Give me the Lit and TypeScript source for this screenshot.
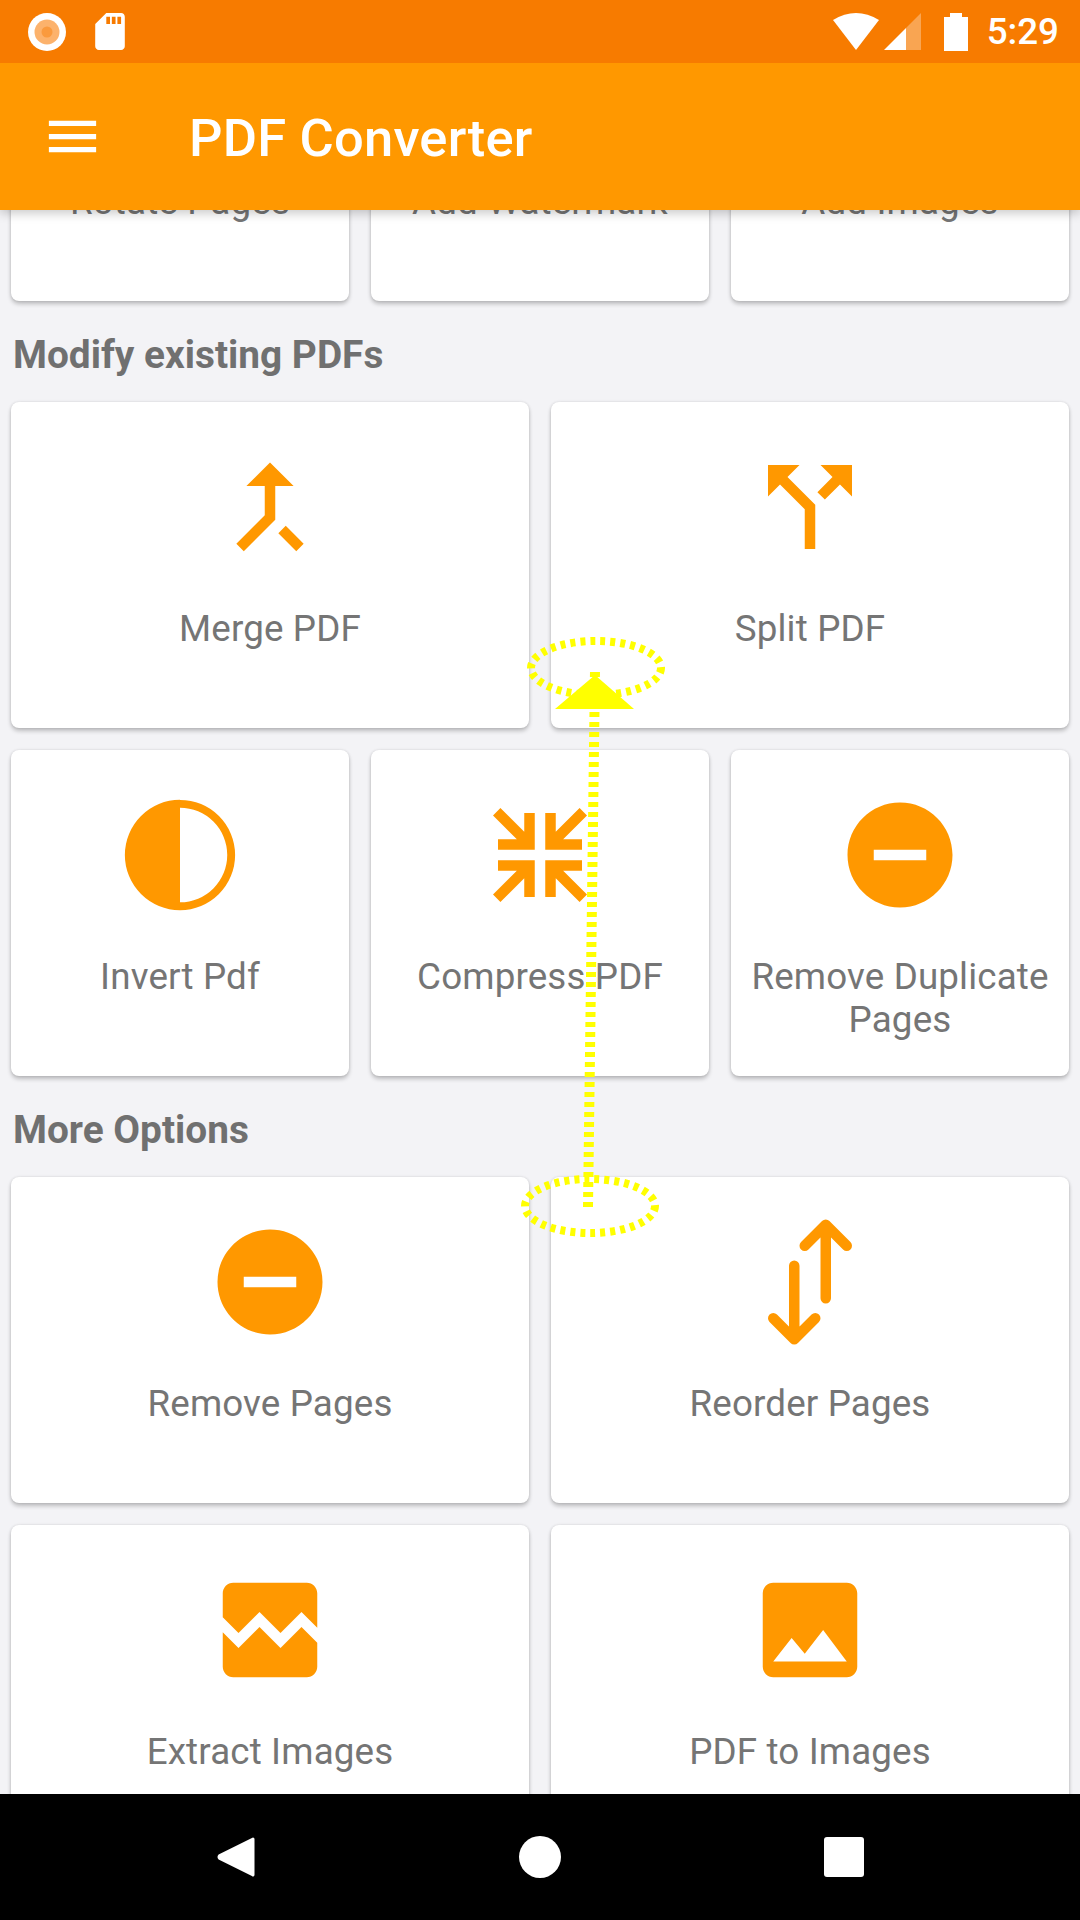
import { LitElement, html, css, svg } from 'lit';
import { customElement } from 'lit/decorators.js';

const COMPRESS_ARM = 'M3.05 4.46L4.46 3.05 9 7.59V4h2v7H4V9h3.59z';

const ICONS: Record<string, unknown> = {
  merge: svg`<path d="M17 20.41L18.41 19 15 15.59 13.59 17 17 20.41zM7.5 8H11v5.59L5.59 19 7 20.41l6-6V8h3.5L12 3.5 7.5 8z"/>`,
  split: svg`<path d="M14 4l2.29 2.29-2.88 2.88 1.42 1.42 2.88-2.88L20 10V4zm-4 0H4v6l2.29-2.29 4.71 4.7V20h2v-8.41l-5.29-5.3z"/>`,
  invert: svg`<path fill-rule="evenodd" d="M12 1.5a10.5 10.5 0 1 0 0 21 10.5 10.5 0 0 0 0-21zM12 3a9 9 0 0 1 0 18z"/>`,
  compress: svg`<path d=${COMPRESS_ARM}/>
    <path transform="matrix(-1 0 0 1 24 0)" d=${COMPRESS_ARM}/>
    <path transform="matrix(1 0 0 -1 0 24)" d=${COMPRESS_ARM}/>
    <path transform="matrix(-1 0 0 -1 24 24)" d=${COMPRESS_ARM}/>`,
  remove: svg`<path d="M12 2C6.48 2 2 6.48 2 12s4.48 10 10 10 10-4.48 10-10S17.52 2 12 2zm5 11H7v-2h10v2z"/>`,
  reorder: svg`<path fill="none" stroke="currentColor" stroke-width="2" stroke-linecap="round" stroke-linejoin="round" d="M15 15.1V1.2M11 5.1l4-4 4 4M9 8.9v14M5 18.9l4 4 4-4"/>`,
  broken: svg`<path d="M21 5v6.59l-3-3.01-4 4.01-4-4-4 4-3-3.01V5c0-1.1.9-2 2-2h14c1.1 0 2 .9 2 2zm-3 6.42l3 3.01V19c0 1.1-.9 2-2 2H5c-1.1 0-2-.9-2-2v-6.58l3 2.99 4-4 4 4 4-3.99z"/>`,
  image: svg`<path d="M21 19V5c0-1.1-.9-2-2-2H5c-1.1 0-2 .9-2 2v14c0 1.1.9 2 2 2h14c1.1 0 2-.9 2-2zM8.5 13.5l2.5 3.01L14.5 12l4.5 6H5l3.5-4.5z"/>`,
};

interface Tool {
  label: string;
  icon?: string;
}

type Row = Tool[];

const TOP_ROW: Row = [{ label: 'Rotate Pages' }, { label: 'Add Watermark' }, { label: 'Add Images' }];

const MODIFY: Row[] = [
  [
    { label: 'Merge PDF', icon: 'merge' },
    { label: 'Split PDF', icon: 'split' },
  ],
  [
    { label: 'Invert Pdf', icon: 'invert' },
    { label: 'Compress PDF', icon: 'compress' },
    { label: 'Remove Duplicate Pages', icon: 'remove' },
  ],
];

const MORE: Row[] = [
  [
    { label: 'Remove Pages', icon: 'remove' },
    { label: 'Reorder Pages', icon: 'reorder' },
  ],
  [
    { label: 'Extract Images', icon: 'broken' },
    { label: 'PDF to Images', icon: 'image' },
  ],
];

@customElement('app-root')
export class AppRoot extends LitElement {
  static styles = css`
    :host {
      display: flex;
      flex-direction: column;
      position: relative;
      width: 1080px;
      height: 1920px;
      overflow: hidden;
      background: #f3f3f6;
      font-family: Roboto, sans-serif;
    }
    .status {
      flex: none;
      height: 63px;
      display: flex;
      align-items: center;
      padding: 0 21px 0 28px;
      background: #f77b00;
      color: #fff;
      position: relative;
      z-index: 3;
    }
    .status svg {
      display: block;
      flex: none;
    }
    .sd {
      margin-left: 29px;
    }
    .status__spacer {
      flex: 1;
    }
    .signal {
      margin-left: 5px;
    }
    .battery {
      margin-left: 23px;
    }
    .time {
      margin-left: 19px;
      font-size: 36.75px;
      font-weight: 500;
      line-height: 43px;
    }
    .toolbar {
      flex: none;
      height: 147px;
      display: flex;
      align-items: center;
      padding-left: 41px;
      background: #ff9800;
      color: #fff;
      box-shadow: 0 3px 10px rgba(0, 0, 0, 0.22);
      position: relative;
      z-index: 2;
    }
    .toolbar svg {
      display: block;
      fill: currentColor;
    }
    .toolbar__title {
      margin-left: 85px;
      padding-top: 2px;
      font-size: 52.5px;
      font-weight: 500;
      letter-spacing: 0.2px;
    }
    .content {
      flex: 1;
      min-height: 0;
      overflow: hidden;
    }
    .scroller {
      margin-top: -235px;
      padding: 0 11px;
      display: flex;
      flex-direction: column;
      gap: 22px;
    }
    .row {
      display: flex;
      gap: 22px;
    }
    .card {
      flex: 1 1 0;
      min-width: 0;
      height: 326px;
      box-sizing: border-box;
      padding: 42px 16px 0;
      display: flex;
      flex-direction: column;
      align-items: center;
      background: #fff;
      border-radius: 8px;
      box-shadow: 0 3px 4px rgba(0, 0, 0, 0.22), 0 0 3px rgba(0, 0, 0, 0.12);
    }
    .card__icon {
      display: block;
      flex: none;
      width: 126px;
      height: 126px;
      fill: currentColor;
      color: #ff9800;
    }
    .card__label {
      margin-top: 37px;
      font-size: 36.75px;
      line-height: 43px;
      letter-spacing: 0.15px;
      color: #757575;
      text-align: center;
    }
    .heading {
      height: 57px;
      box-sizing: border-box;
      padding: 5px 2px 0;
      display: flex;
      align-items: center;
      font-size: 38.8px;
      font-weight: 700;
      color: #707070;
    }
    .section {
      display: flex;
      flex-direction: column;
      gap: 22px;
    }
    .nav {
      flex: none;
      height: 126px;
      display: flex;
      justify-content: center;
      align-items: center;
      background: #000;
      position: relative;
      z-index: 3;
    }
    .nav__cell {
      width: 304px;
      display: flex;
      justify-content: center;
    }
    .nav svg {
      display: block;
      fill: #fff;
    }
    .gesture {
      position: absolute;
      left: 0;
      top: 0;
      z-index: 4;
      pointer-events: none;
    }
  `;

  private renderCard(tool: Tool) {
    return html`
      <div class="card">
        <svg class="card__icon" viewBox="0 0 24 24">${tool.icon ? ICONS[tool.icon] : null}</svg>
        <div class="card__label">${tool.label}</div>
      </div>
    `;
  }

  private renderRow(row: Row) {
    return html`<div class="row">${row.map((t) => this.renderCard(t))}</div>`;
  }

  private renderStatus() {
    return html`
      <div class="status">
        <svg width="38" height="38" viewBox="0 0 38 38">
          <circle cx="19" cy="19" r="19" fill="#fff" />
          <circle cx="19" cy="19" r="12.5" fill="#fcb26c" />
          <circle cx="19" cy="19" r="5.5" fill="#fa9a3e" />
        </svg>
        <svg class="sd" width="30" height="37" viewBox="4 2 16 20" fill="#fff">
          <path
            d="M18 2h-8L4.02 8 4 20c0 1.1.9 2 2 2h12c1.1 0 2-.9 2-2V4c0-1.1-.9-2-2-2zm-6 6h-2V4h2v4zm3 0h-2V4h2v4zm3 0h-2V4h2v4z"
          />
        </svg>
        <div class="status__spacer"></div>
        <svg width="46" height="37" viewBox="0 0 46 37" fill="#fff">
          <path d="M0 7Q23-7 46 7L23 37z" />
        </svg>
        <svg class="signal" width="37" height="37" viewBox="0 0 37 37">
          <path d="M0 37L22 15V37z" fill="#fff" />
          <path d="M22 15L37 0V37H22z" fill="#fff" fill-opacity="0.32" />
        </svg>
        <svg class="battery" width="24" height="38" viewBox="0 0 24 38" fill="#fff">
          <path d="M6 0h12v4h6v34H0V4h6z" />
        </svg>
        <div class="time">5:29</div>
      </div>
    `;
  }

  private renderNav() {
    return html`
      <div class="nav">
        <div class="nav__cell">
          <svg width="38" height="42" viewBox="0 0 38 42">
            <path d="M36 1.5a1.5 1.5 0 0 1 1.5 1.5v36a1.5 1.5 0 0 1-2.6 1L1.6 23.6a4 4 0 0 1 0-5.2L34.9 2z" />
          </svg>
        </div>
        <div class="nav__cell">
          <svg width="42" height="42" viewBox="0 0 42 42"><circle cx="21" cy="21" r="21" /></svg>
        </div>
        <div class="nav__cell">
          <svg width="40" height="40" viewBox="0 0 40 40"><rect width="40" height="40" rx="3" /></svg>
        </div>
      </div>
    `;
  }

  render() {
    return html`
      ${this.renderStatus()}
      <div class="toolbar">
        <svg width="63" height="63" viewBox="0 0 24 24">
          <path d="M3 18h18v-2H3v2zm0-5h18v-2H3v2zm0-7v2h18V6H3z" />
        </svg>
        <div class="toolbar__title">PDF Converter</div>
      </div>
      <div class="content">
        <div class="scroller">
          ${this.renderRow(TOP_ROW)}
          <div class="section">
            <div class="heading">Modify existing PDFs</div>
            ${MODIFY.map((r) => this.renderRow(r))}
          </div>
          <div class="section">
            <div class="heading">More Options</div>
            ${MORE.map((r) => this.renderRow(r))}
          </div>
        </div>
      </div>
      ${this.renderNav()}
      <svg class="gesture" width="1080" height="1920" viewBox="0 0 1080 1920" fill="none" stroke="#ffff00">
        <ellipse cx="596" cy="668" rx="65" ry="27" stroke-width="8" stroke-dasharray="5 5" />
        <ellipse cx="590" cy="1206" rx="65" ry="27" stroke-width="8" stroke-dasharray="5 5" />
        <line x1="588" y1="1207" x2="595" y2="671" stroke-width="10" stroke-dasharray="5 5" />
        <path d="M555 709L595 675 634 709z" fill="#ffff00" stroke="none" />
      </svg>
    `;
  }
}
